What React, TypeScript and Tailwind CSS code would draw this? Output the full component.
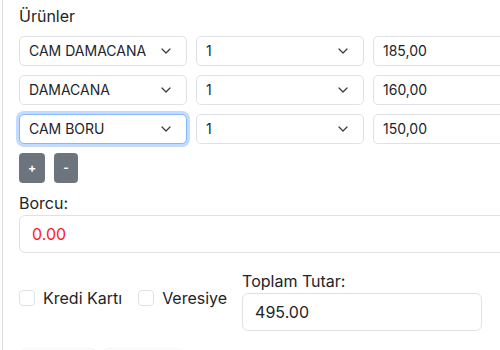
import { ChevronDown } from 'lucide-react'

const rows = [
    { product: 'CAM DAMACANA', qty: '1', price: '185,00', focus: false },
    { product: 'DAMACANA', qty: '1', price: '160,00', focus: false },
    { product: 'CAM BORU', qty: '1', price: '150,00', focus: true },
]

function Select({ value, focus }: { value: string; focus?: boolean }) {
    return (
        <div
            className={`flex items-center justify-between h-[30px] pl-[9px] pr-[12px] rounded-[5px] bg-white text-sm border ${focus ? 'border-[#86b7fe] shadow-[0_0_0_3px_rgba(13,110,253,0.25)]' : 'border-[#dee2e6]'}`}
        >
            <span>{value}</span>
            <ChevronDown size={16} strokeWidth={1.8} className="text-[#343a40]" />
        </div>
    )
}

export default function App() {
    return (
        <div className="h-[350px] w-[500px] overflow-hidden bg-white pl-[2px] text-[#212529] font-['Inter',sans-serif]">
            <div className="h-full border-l border-[#dcdcdc] pl-4 pt-1">
                <div className="text-base leading-6 mb-2">Ürünler</div>

                <div className="w-[522px] flex flex-col gap-[9px]">
                    {rows.map((r, i) => (
                        <div key={i} className="grid grid-cols-3 gap-[9px]">
                            <Select value={r.product} focus={r.focus} />
                            <Select value={r.qty} />
                            <div className="flex items-center h-[30px] px-[9px] rounded-[5px] border border-[#dee2e6] bg-white text-sm">
                                {r.price}
                            </div>
                        </div>
                    ))}
                </div>

                <div className="flex gap-[9px] mt-[9px]">
                    <button className="w-[26px] h-[30px] rounded-[4px] bg-[#6c757d] text-white text-xs font-bold flex items-center justify-center">+</button>
                    <button className="w-[24px] h-[30px] rounded-[4px] bg-[#6c757d] text-white text-xs font-bold flex items-center justify-center">-</button>
                </div>

                <div className="text-base leading-6 mt-2">Borcu:</div>
                <div className="w-[540px] h-[38px] rounded-[6px] border border-[#dee2e6] flex items-center px-3 text-base text-[#ff1a1a]">
                    0.00
                </div>

                <div className="flex items-start mt-4">
                    <div className="flex items-center mt-[17px] h-6">
                        <span className="w-4 h-4 rounded-[4px] border border-[#dee2e6] bg-white" />
                        <span className="ml-2 text-base">Kredi Kartı</span>
                        <span className="ml-4 w-4 h-4 rounded-[4px] border border-[#dee2e6] bg-white" />
                        <span className="ml-2 text-base">Veresiye</span>
                    </div>
                    <div className="ml-[15px]">
                        <div className="text-base leading-6">Toplam Tutar:</div>
                        <div className="w-[240px] h-[38px] rounded-[6px] border border-[#dee2e6] flex items-center px-3 text-base">
                            495.00
                        </div>
                    </div>
                </div>

                <div className="flex gap-[7px] mt-[17px] pl-px">
                    <div className="w-[76px] h-[38px] rounded-[6px] border-t border-[#f4f4f4]" />
                    <div className="w-[80px] h-[38px] rounded-[6px] border-t border-[#f4f4f4]" />
                </div>
            </div>
        </div>
    )
}
